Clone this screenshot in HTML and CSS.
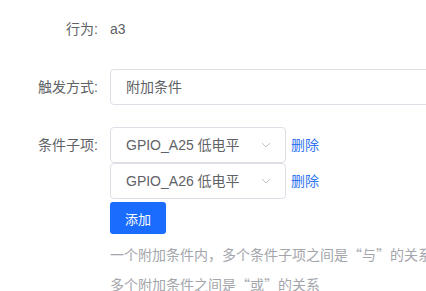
FILE: index.html
```html
<!DOCTYPE html>
<html lang="zh-CN">
  <head>
    <meta charset="UTF-8" />
    <meta name="viewport" content="width=device-width, initial-scale=1.0" />
    <title>附加条件</title>
    <link rel="stylesheet" href="styles.css">
  </head>
  <body>
    <form class="form">
      <div class="form-item">
        <label class="label">行为:</label>
        <div class="content">a3</div>
      </div>
      <div class="form-item">
        <label class="label">触发方式:</label>
        <div class="content">
          <div class="input wide">附加条件</div>
        </div>
      </div>
      <div class="form-item">
        <label class="label">条件子项:</label>
        <div class="content">
          <div class="cond-row">
            <div class="input select">
              <span>GPIO_A25 低电平</span>
              <svg class="arrow" width="10" height="6" viewBox="0 0 10 6"><path d="M1 1l4 4 4-4" fill="none" stroke="#c0c4cc" stroke-width="1"/></svg>
            </div>
            <a class="link">删除</a>
          </div>
          <div class="cond-row">
            <div class="input select">
              <span>GPIO_A26 低电平</span>
              <svg class="arrow" width="10" height="6" viewBox="0 0 10 6"><path d="M1 1l4 4 4-4" fill="none" stroke="#c0c4cc" stroke-width="1"/></svg>
            </div>
            <a class="link">删除</a>
          </div>
          <button class="btn" type="button">添加</button>
          <div class="tip">一个附加条件内，多个条件子项之间是“与”的关系</div>
          <div class="tip">多个附加条件之间是“或”的关系</div>
        </div>
      </div>
    </form>
  </body>
</html>
```

FILE: styles.css
```css
html,
body {
  margin: 0;
  overflow: hidden;
  background: #fff;
}
body {
  font-family: "Liberation Sans", "Noto Sans CJK SC", sans-serif;
  font-size: 14px;
  color: #606266;
}
.form {
  padding-top: 11px;
}
.form-item {
  display: flex;
  margin-bottom: 22px;
}
.label {
  width: 110px;
  flex-shrink: 0;
  box-sizing: border-box;
  padding-right: 12px;
  text-align: right;
  line-height: 36px;
}
.content {
  flex: 1;
  min-width: 0;
  overflow: hidden;
  line-height: 36px;
}
.input {
  box-sizing: border-box;
  height: 36px;
  line-height: 34px;
  padding: 0 15px;
  border: 1px solid #dcdfe6;
  border-radius: 4px;
  color: #606266;
}
.wide {
  width: 420px;
}
.cond-row {
  display: flex;
  align-items: center;
}
.select {
  width: 176px;
  display: flex;
  align-items: center;
  justify-content: space-between;
  padding-right: 14px;
}
.arrow {
  display: block;
}
.link {
  margin-left: 5px;
  color: #2f74f0;
  cursor: pointer;
}
.btn {
  display: block;
  margin-top: 3px;
  width: 56px;
  height: 32px;
  padding: 0;
  font-family: inherit;
  font-size: 13px;
  color: #fff;
  background: #1a6cff;
  border: none;
  border-radius: 3px;
}
.tip {
  font-family: "Noto Sans CJK SC", sans-serif;
  line-height: 30px;
  color: #a4a6ab;
  white-space: nowrap;
}
.btn + .tip {
  margin-top: 5px;
}
```
